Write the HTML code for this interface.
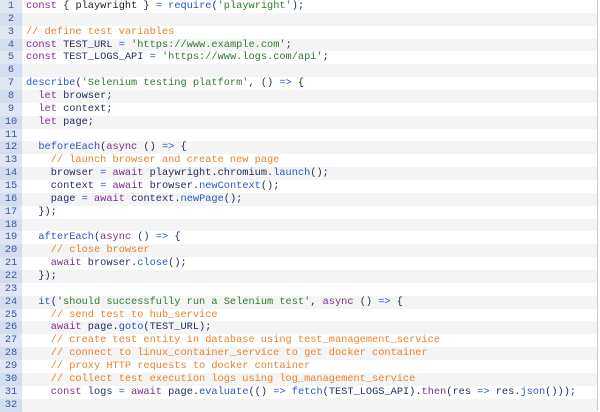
<!DOCTYPE html>
<html><head><style>
body{margin:0;width:600px;height:411px;overflow:hidden;background:#fff;font-family:"Liberation Mono",monospace;font-size:10.3px;}
.w{position:absolute;left:0;top:0;width:597px;border-right:1px solid #c8c8c8;height:411px;}
.l{height:12.87px;line-height:12.87px;white-space:pre;display:flex;}
.l:nth-child(even){background:#f4f4f4}
.n{width:22px;text-align:center;background:#dfe7f5;color:#3a5a9a;flex:none}
.l:nth-child(even) .n{background:#d3ddf0}
.c{padding-left:4px;color:#1c2a5a}
.k{color:#7b2d8e}.s{color:#2f7a2f}.m{color:#e8832a}.f{color:#2a55c8}.o{color:#2a55c8}.p{color:#222}
</style></head><body><div class="w">
<div class="l"><span class="n">1</span><span class="c"><span class="k">const</span> <span class="p">{ playwright }</span> <span class="o">=</span> <span class="f">require</span>(<span class="s">'playwright'</span>);</span></div>
<div class="l"><span class="n">2</span><span class="c"></span></div>
<div class="l"><span class="n">3</span><span class="c"><span class="m">// define test variables</span></span></div>
<div class="l"><span class="n">4</span><span class="c"><span class="k">const</span> TEST_URL <span class="o">=</span> <span class="s">'https://www.example.com'</span>;</span></div>
<div class="l"><span class="n">5</span><span class="c"><span class="k">const</span> TEST_LOGS_API <span class="o">=</span> <span class="s">'https://www.logs.com/api'</span>;</span></div>
<div class="l"><span class="n">6</span><span class="c"></span></div>
<div class="l"><span class="n">7</span><span class="c"><span class="f">describe</span>(<span class="s">'Selenium testing platform'</span>, () <span class="o">=&gt;</span> {</span></div>
<div class="l"><span class="n">8</span><span class="c">  <span class="k">let</span> browser;</span></div>
<div class="l"><span class="n">9</span><span class="c">  <span class="k">let</span> context;</span></div>
<div class="l"><span class="n">10</span><span class="c">  <span class="k">let</span> page;</span></div>
<div class="l"><span class="n">11</span><span class="c"></span></div>
<div class="l"><span class="n">12</span><span class="c">  <span class="f">beforeEach</span>(<span class="k">async</span> () <span class="o">=&gt;</span> {</span></div>
<div class="l"><span class="n">13</span><span class="c">    <span class="m">// launch browser and create new page</span></span></div>
<div class="l"><span class="n">14</span><span class="c">    browser <span class="o">=</span> <span class="k">await</span> playwright.chromium.<span class="f">launch</span>();</span></div>
<div class="l"><span class="n">15</span><span class="c">    context <span class="o">=</span> <span class="k">await</span> browser.<span class="f">newContext</span>();</span></div>
<div class="l"><span class="n">16</span><span class="c">    page <span class="o">=</span> <span class="k">await</span> context.<span class="f">newPage</span>();</span></div>
<div class="l"><span class="n">17</span><span class="c">  });</span></div>
<div class="l"><span class="n">18</span><span class="c"></span></div>
<div class="l"><span class="n">19</span><span class="c">  <span class="f">afterEach</span>(<span class="k">async</span> () <span class="o">=&gt;</span> {</span></div>
<div class="l"><span class="n">20</span><span class="c">    <span class="m">// close browser</span></span></div>
<div class="l"><span class="n">21</span><span class="c">    <span class="k">await</span> browser.<span class="f">close</span>();</span></div>
<div class="l"><span class="n">22</span><span class="c">  });</span></div>
<div class="l"><span class="n">23</span><span class="c"></span></div>
<div class="l"><span class="n">24</span><span class="c">  <span class="f">it</span>(<span class="s">'should successfully run a Selenium test'</span>, <span class="k">async</span> () <span class="o">=&gt;</span> {</span></div>
<div class="l"><span class="n">25</span><span class="c">    <span class="m">// send test to hub_service</span></span></div>
<div class="l"><span class="n">26</span><span class="c">    <span class="k">await</span> page.<span class="f">goto</span>(TEST_URL);</span></div>
<div class="l"><span class="n">27</span><span class="c">    <span class="m">// create test entity in database using test_management_service</span></span></div>
<div class="l"><span class="n">28</span><span class="c">    <span class="m">// connect to linux_container_service to get docker container</span></span></div>
<div class="l"><span class="n">29</span><span class="c">    <span class="m">// proxy HTTP requests to docker container</span></span></div>
<div class="l"><span class="n">30</span><span class="c">    <span class="m">// collect test execution logs using log_management_service</span></span></div>
<div class="l"><span class="n">31</span><span class="c">    <span class="k">const</span> logs <span class="o">=</span> <span class="k">await</span> page.<span class="f">evaluate</span>(() <span class="o">=&gt;</span> <span class="f">fetch</span>(TEST_LOGS_API).<span class="k">then</span>(res <span class="o">=&gt;</span> res.<span class="f">json</span>()));</span></div>
<div class="l"><span class="n">32</span><span class="c"></span></div>
</div></body></html>
